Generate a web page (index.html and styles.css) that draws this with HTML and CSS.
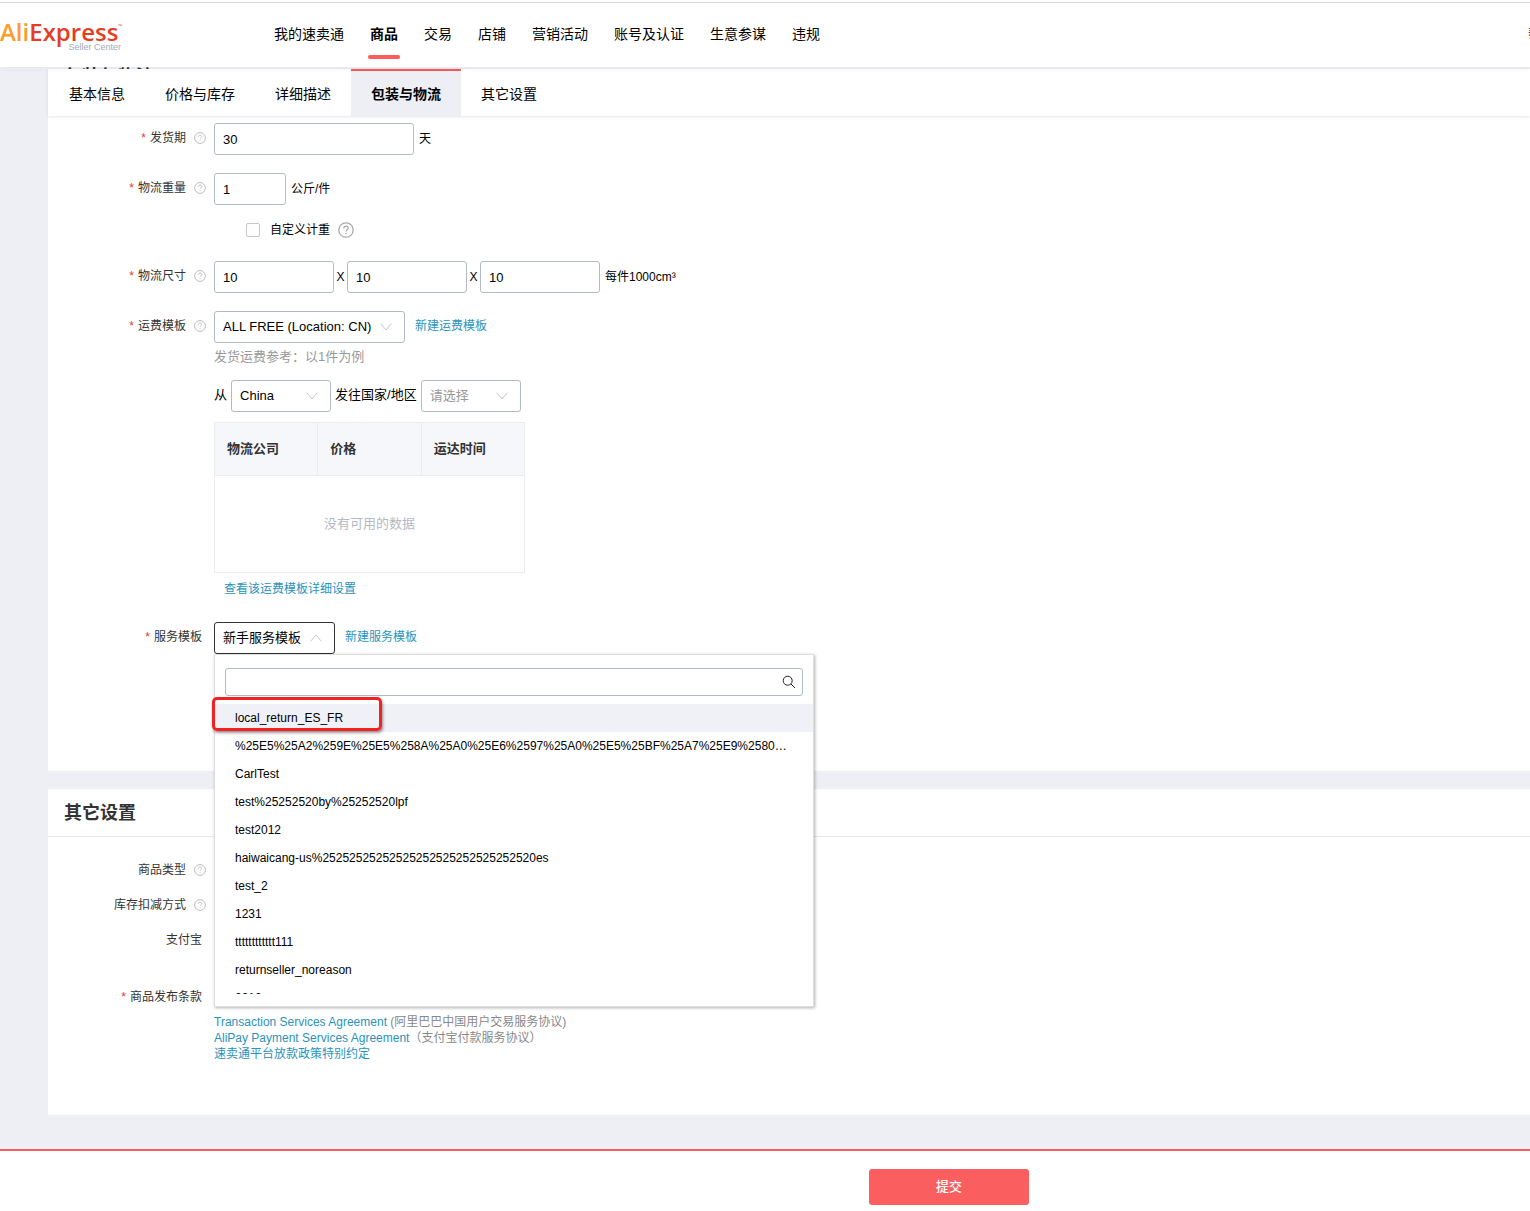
FILE: index.html
```html
<!DOCTYPE html>
<html lang="zh-CN">
<head>
<meta charset="utf-8">
<meta name="viewport" content="width=device-width, initial-scale=1">
<title>AliExpress Seller Center</title>
<link rel="stylesheet" href="styles.css">
</head>
<body>
<svg class="sprite" aria-hidden="true">
  <symbol id="help" viewBox="0 0 16 16"><circle cx="8" cy="8" r="7.2"/><path d="M5.8 6.4c0-1.4 1-2.2 2.2-2.2s2.2.8 2.2 2c0 1.6-2.1 1.7-2.1 3.3M8.1 11v1.2"/></symbol>
  <symbol id="chevron" viewBox="0 0 12 8"><path d="M.7.7 6 7 11.300.7"/></symbol>
  <symbol id="search" viewBox="0 0 14 14"><circle cx="5.700" cy="5.700" r="4.500"/><path d="m9 9 4 4"/></symbol>
</svg>

<header class="header">
  <a class="logo" href="#" aria-label="AliExpress Seller Center">
    <span class="logo-name"><span class="logo-ali">Ali</span>Express<span class="logo-tm">™</span></span>
    <span class="logo-sub">Seller Center</span>
  </a>
  <nav class="nav">
    <a href="#">我的速卖通</a>
    <a href="#" class="current">商品</a>
    <a href="#">交易</a>
    <a href="#">店铺</a>
    <a href="#">营销活动</a>
    <a href="#">账号及认证</a>
    <a href="#">生意参谋</a>
    <a href="#">违规</a>
  </nav>
  <a class="help-link" href="#">帮助</a>
</header>

<main class="main">
  <div class="peek"><h2>包装与物流</h2></div>
  <nav class="tabs">
    <a href="#">基本信息</a>
    <a href="#">价格与库存</a>
    <a href="#">详细描述</a>
    <a href="#" class="current">包装与物流</a>
    <a href="#">其它设置</a>
  </nav>

  <section class="card shipping">
    <div class="row">
      <label class="label required" for="lead">发货期 <svg class="help"><use href="#help"/></svg></label>
      <div class="field"><div class="line">
        <input class="input wide" id="lead" type="text" value="30"><span class="unit">天</span>
      </div></div>
    </div>
    <div class="row">
      <label class="label required" for="weight">物流重量 <svg class="help"><use href="#help"/></svg></label>
      <div class="field">
        <div class="line"><input class="input short" id="weight" type="text" value="1"><span class="unit">公斤/件</span></div>
        <div class="custom">
          <input class="check" type="checkbox" id="custom"><label for="custom">自定义计重</label>
          <svg class="help large"><use href="#help"/></svg>
        </div>
      </div>
    </div>
    <div class="row">
      <label class="label required" for="length">物流尺寸 <svg class="help"><use href="#help"/></svg></label>
      <div class="field"><div class="line">
        <input class="input" id="length" type="text" value="10"><span class="times">X</span>
        <input class="input" type="text" value="10" aria-label="宽"><span class="times">X</span>
        <input class="input" type="text" value="10" aria-label="高"><span class="unit">每件1000cm³</span>
      </div></div>
    </div>
    <div class="row">
      <label class="label required" for="freight">运费模板 <svg class="help"><use href="#help"/></svg></label>
      <div class="field">
        <div class="line">
          <span class="select freight"><select id="freight"><option>ALL FREE (Location: CN)</option></select><svg><use href="#chevron"/></svg></span>
          <a class="link" href="#">新建运费模板</a>
        </div>
        <p class="hint">发货运费参考：以1件为例</p>
        <div class="line route">
          <label for="from">从</label>
          <span class="select"><select id="from"><option>China</option></select><svg><use href="#chevron"/></svg></span>
          <label for="to">发往国家/地区</label>
          <span class="select empty"><select id="to"><option>请选择</option></select><svg><use href="#chevron"/></svg></span>
        </div>
        <table class="rates">
          <thead><tr><th>物流公司</th><th>价格</th><th>运达时间</th></tr></thead>
          <tbody><tr><td colspan="3">没有可用的数据</td></tr></tbody>
        </table>
        <p class="detail"><a class="link" href="#">查看该运费模板详细设置</a></p>
      </div>
    </div>
    <div class="row">
      <label class="label required plain" for="service">服务模板</label>
      <div class="field service">
        <div class="line">
          <span class="select open"><select id="service"><option>新手服务模板</option></select><svg><use href="#chevron"/></svg></span>
          <a class="link" href="#">新建服务模板</a>
        </div>
        <div class="menu">
          <div class="search"><input type="text" aria-label="搜索"><svg><use href="#search"/></svg></div>
          <ul class="options" role="listbox" aria-label="服务模板">
            <li role="option" class="active">local_return_ES_FR</li>
            <li role="option">%25E5%25A2%259E%25E5%258A%25A0%25E6%2597%25A0%25E5%25BF%25A7%25E9%2580%2580%25E8%25B4%25A7</li>
            <li role="option">CarlTest</li>
            <li role="option">test%25252520by%25252520lpf</li>
            <li role="option">test2012</li>
            <li role="option">haiwaicang-us%25252525252525252525252525252520es</li>
            <li role="option">test_2</li>
            <li role="option">1231</li>
            <li role="option">tttttttttttt111</li>
            <li role="option">returnseller_noreason</li>
            <li role="option">2010</li>
          </ul>
          <div class="marker"></div>
        </div>
      </div>
    </div>
  </section>

  <section class="card other">
    <h2 class="title">其它设置</h2>
    <div class="row"><span class="label">商品类型 <svg class="help"><use href="#help"/></svg></span></div>
    <div class="row"><span class="label">库存扣减方式 <svg class="help"><use href="#help"/></svg></span></div>
    <div class="row"><span class="label plain">支付宝</span></div>
    <div class="row terms">
      <span class="label required plain">商品发布条款</span>
      <div class="agreements">
        <p><a class="link" href="#">Transaction Services Agreement</a> (阿里巴巴中国用户交易服务协议)</p>
        <p><a class="link" href="#">AliPay Payment Services Agreement</a>（支付宝付款服务协议）</p>
        <p><a class="link" href="#">速卖通平台放款政策特别约定</a></p>
      </div>
    </div>
  </section>
</main>

<footer class="footer"><button type="button">提交</button></footer>
</body>
</html>
```

FILE: styles.css
```css
* { box-sizing: border-box; }
body {
  margin: 0;
  background: #eeeff4;
  color: #000;
  font: 12px/16px "Liberation Sans", "Noto Sans CJK SC", sans-serif;
  overflow-x: hidden;
}
h2, p, ul { margin: 0; padding: 0; }
a { color: inherit; text-decoration: none; }
input, select, button { font: inherit; color: inherit; }
svg { display: block; flex: none; fill: none; stroke: currentColor; }
.sprite { display: none; }

/* Header */
.header {
  position: relative;
  z-index: 2;
  display: flex;
  height: 67px;
  padding-top: 2px;
  background: linear-gradient(#d9dadc, #d9dadc) 0 2px / 100% 1px no-repeat #fff;
  box-shadow: 0 2px 6px rgba(30, 40, 70, .04);
}
.logo { width: 274px; padding-top: 16px; }
.logo-name { display: flex; color: #e43d24; font: 600 24px/28px "Open Sans", sans-serif; }
.logo-ali { color: #fb9d2e; }
.logo-tm { font-size: 5px; line-height: 16px; }
.logo-sub { display: block; width: 121px; margin-top: -4px; color: #a3aab9; font-size: 9px; line-height: 10px; text-align: right; }
.nav { display: flex; gap: 26px; font-size: 14px; line-height: 20px; }
.nav a { display: flex; flex-direction: column; align-items: center; padding-top: 22px; }
.nav .current { position: relative; font-weight: 700; }
.nav .current::after {
  content: "";
  position: absolute;
  top: 53px;
  width: 32px;
  height: 4px;
  border-radius: 2px;
  background: #ff5b5e;
}
.help-link { width: 2px; height: 42px; margin-left: auto; padding-top: 22px; overflow: hidden; font-size: 14px; line-height: 20px; white-space: nowrap; }

/* Section tabs */
.main { margin-left: 48px; }
.peek { height: 2px; padding-left: 16px; overflow: hidden; }
.peek h2 { color: #333; font-size: 18px; line-height: 20px; font-weight: 700; }
.tabs {
  position: relative;
  display: flex;
  height: 47px;
  padding-left: 1px;
  background: #fff;
  font-size: 14px;
  line-height: 20px;
  box-shadow: 0 1px 3px rgba(0, 0, 0, .1);
}
.tabs a { padding: 13px 20px 12px; border-top: 2px solid transparent; }
.tabs .current { border-color: #f95c5c; background: #eeeff4; font-weight: 700; }

/* Form */
.card { background: #fff; }
.shipping { padding: 7px 0 99px; }
.row { display: grid; grid-template-columns: 158px 1fr; column-gap: 8px; }
.shipping .row { margin-bottom: 18px; }
.label { display: flex; justify-content: flex-end; align-items: center; height: 30px; color: #333; }
.label.plain { padding-right: 4px; }
.required::before { content: "*"; margin-right: 4px; color: #e6392b; }
.help { width: 12px; height: 12px; margin-left: 8px; color: #bbb; stroke-width: 1.3; }
.help.large { width: 16px; height: 16px; color: #aaa; }
.line { display: flex; align-items: center; }
.input {
  width: 120px;
  height: 32px;
  padding: 0 8px;
  border: 1px solid #b3b9c6;
  border-radius: 3px;
  background: #fff;
  font-size: 13px;
}
.input.wide { width: 200px; }
.input.short { width: 72px; }
.unit { padding: 0 0 1px 5px; }
.times { width: 13px; text-align: center; }
.custom { display: flex; align-items: center; height: 16px; margin: 17px 0 5px; padding-left: 32px; }
.check { appearance: none; width: 14px; height: 14px; margin: 0 10px 0 0; border: 1px solid #c4c6cf; border-radius: 2px; background: #fff; }
.link { color: #2a93bb; }
.line .link { padding: 0 0 2px 10px; }

.select { display: grid; width: 100px; height: 32px; align-items: center; font-size: 13px; }
.select select, .select svg { grid-area: 1 / 1; }
.select select {
  appearance: none;
  width: 100%;
  height: 32px;
  padding: 0 8px;
  border: 1px solid #b3b9c6;
  border-radius: 3px;
  background: #fff;
}
.select svg { justify-self: end; width: 12px; height: 8px; margin-right: 13px; color: #c4c6cf; pointer-events: none; }
.select.freight { width: 191px; }
.select.empty { color: #999; }
.select.open { width: 121px; }
.select.open select { border-color: #333; }
.select.open svg { transform: rotate(180deg); }

.hint { margin-top: 5px; color: #999; font-size: 13px; line-height: 18px; }
.route { gap: 4px; margin-top: 14px; font-size: 13px; }
.route label { padding-bottom: 2px; }
.rates { width: 311px; margin-top: 10px; border-collapse: collapse; table-layout: fixed; font-size: 13px; }
.rates th { height: 53px; padding: 0 12px; border: 1px solid #ebecf0; background: #f6f7fa; color: #333; font-weight: 700; text-align: left; }
.rates td { height: 97px; padding: 0; border: 1px solid #ebecf0; color: #b3b9c4; text-align: center; }
.detail { margin: 7px 0 6px 10px; line-height: 18px; }

/* Open template menu */
.service { position: relative; }
.menu {
  position: absolute;
  top: 32px;
  left: 0;
  z-index: 3;
  width: 600px;
  padding: 13px 0 12px;
  border: 1px solid #dcdee3;
  background: #fff;
  box-shadow: 1px 1px 3px rgba(0, 0, 0, .3);
}
.search { display: grid; align-items: center; margin: 0 10px 8px; }
.search input, .search svg { grid-area: 1 / 1; }
.search input { width: 100%; height: 28px; padding: 0 32px 0 8px; border: 1px solid #b3b9c6; border-radius: 3px; background: #fff; }
.search svg { justify-self: end; width: 14px; height: 14px; margin-right: 7px; color: #222; }
.options { height: 290px; overflow: hidden; list-style: none; }
.options li { height: 28px; padding: 0 20px; overflow: hidden; line-height: 28px; text-overflow: ellipsis; white-space: nowrap; }
.options .active { background: #f0f1f6; }
.marker {
  position: absolute;
  top: 42px;
  left: -3px;
  width: 170px;
  height: 34px;
  border: 3px solid #f32121;
  border-radius: 5px;
  box-shadow: 1px 2px 3px rgba(0, 0, 0, .4);
}

/* Other settings */
.other { margin: 18px 0 34px; padding-bottom: 53px; }
.title { height: 48px; margin-bottom: 25px; padding-left: 16px; border-bottom: 1px solid #e6e7eb; color: #333; font-size: 18px; line-height: 48px; font-weight: 700; }
.other .label { height: 16px; }
.other .row { margin-bottom: 19px; }
.other .terms { margin: 41px 0 0; }
.agreements { margin-top: 25px; color: #888; }

.footer { padding: 18px 0 6px 368px; border-top: 2px solid #f95c5c; background: #fff; text-align: center; }
.footer button { display: block; width: 160px; height: 36px; margin: 0 auto; border: 0; border-radius: 3px; background: #fb5e5e; color: #fff; font-size: 13px; font-weight: 500; }
```
